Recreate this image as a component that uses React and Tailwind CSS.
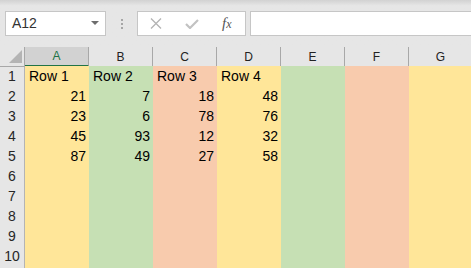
const cols = ['A', 'B', 'C', 'D', 'E', 'F', 'G'];
const fills = ['bg-[#ffe699]', 'bg-[#c6e0b4]', 'bg-[#f8cbad]', 'bg-[#ffe699]', 'bg-[#c6e0b4]', 'bg-[#f8cbad]', 'bg-[#ffe699]'];

const data = [
  ['Row 1', 'Row 2', 'Row 3', 'Row 4'],
  [21, 7, 18, 48],
  [23, 6, 78, 76],
  [45, 93, 12, 32],
  [87, 49, 27, 58],
];

function Toolbar() {
  return (
    <div className="h-[47px] bg-gradient-to-b from-[#d2d2d2] via-[#e6e6e6] via-[12%] to-[#e6e6e6] flex items-start pt-[11px]">
      <div className="ml-[5px] w-[101px] h-[25px] bg-white border border-[#c6c6c6] flex items-center justify-between pl-[6px] pr-[6px]">
        <span className="text-[14px] text-[#333]">A12</span>
        <svg width="8" height="5" viewBox="0 0 8 5"><path d="M0 0h8L4 4z" fill="#6d6d6d" /></svg>
      </div>
      <div className="w-[31px] h-[25px] flex flex-col items-center justify-center gap-[2px]">
        <span className="w-[2px] h-[2px] bg-[#a6a6a6]" />
        <span className="w-[2px] h-[2px] bg-[#a6a6a6]" />
        <span className="w-[2px] h-[2px] bg-[#a6a6a6]" />
      </div>
      <div className="w-[109px] h-[25px] bg-white border border-[#c6c6c6] flex items-center">
        <svg className="ml-[12px]" width="12" height="11" viewBox="0 0 12 11">
          <path d="M1 0.5l10 10M11 0.5l-10 10" stroke="#b3b3b3" strokeWidth="1.3" />
        </svg>
        <svg className="ml-[23px]" width="14" height="10" viewBox="0 0 14 10">
          <path d="M1 5l4 4 8-8" stroke="#c2c2c2" strokeWidth="2.2" fill="none" />
        </svg>
        <span className="ml-[23px] text-[15px] italic text-[#555] leading-none" style={{ fontFamily: '"Liberation Serif", serif' }}>
          f<span className="text-[12px]">x</span>
        </span>
      </div>
      <div className="ml-[4px] flex-1 h-[25px] bg-white border border-[#c6c6c6] border-r-0" />
    </div>
  );
}

function HeaderRow() {
  return (
    <div className="grid grid-cols-[25px_repeat(7,64px)] h-[19px] bg-[#e6e6e6]">
      <div className="relative border-r border-b border-[#a8a8a8]">
        <svg className="absolute left-[9px] top-[3px]" width="13" height="13" viewBox="0 0 13 13">
          <path d="M0 13L13 0v13z" fill="#b4b4b4" />
        </svg>
      </div>
      {cols.map((c, i) =>
        i === 0 ? (
          <div key={c} className="bg-[#d2d2d2] border-r border-[#a8a8a8] border-b-2 border-b-[#217346] flex items-center justify-center text-[12px] text-[#217346]">
            {c}
          </div>
        ) : (
          <div key={c} className="border-r border-b border-[#a8a8a8] flex items-center justify-center text-[12px] text-[#222]">
            {c}
          </div>
        )
      )}
    </div>
  );
}

function Row({ n, values }) {
  return (
    <div className="grid grid-cols-[25px_repeat(7,64px)] h-[20px]">
      <div className="bg-[#e6e6e6] border-r border-b border-[#b4b4b4] flex items-center justify-center text-[14px] text-[#262626]">
        {n}
      </div>
      {cols.map((c, i) => {
        const v = values ? values[i] : undefined;
        return (
          <div
            key={c}
            className={
              fills[i] +
              ' text-[14px] leading-[20px] text-black whitespace-nowrap ' +
              (typeof v === 'number' ? 'text-right pr-[3px]' : 'pl-[4px]')
            }
          >
            {v}
          </div>
        );
      })}
    </div>
  );
}

export default function App() {
  return (
    <div className="w-[471px] h-[268px] overflow-hidden bg-white" style={{ fontFamily: '"Liberation Sans", Arial, sans-serif' }}>
      <Toolbar />
      <HeaderRow />
      {Array.from({ length: 10 }, (_, i) => (
        <Row key={i} n={i + 1} values={data[i]} />
      ))}
      <div className="grid grid-cols-[25px_1fr] h-[2px]">
        <div className="bg-[#e6e6e6] border-r border-[#b4b4b4]" />
        <div />
      </div>
    </div>
  );
}
